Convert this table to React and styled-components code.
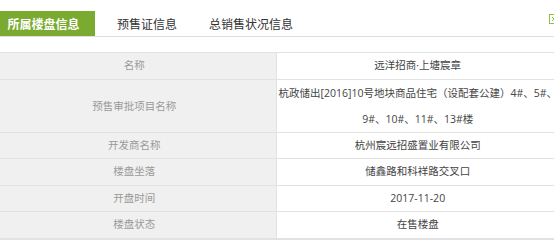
import React from "react";
import styled, { createGlobalStyle } from "styled-components";

const Global = createGlobalStyle`
  html, body { margin: 0; padding: 0; background: #fff; overflow: hidden; }
  body { font-family: "Open Sans", "Noto Sans CJK SC", sans-serif; }
`;

const Page = styled.div`
  margin-left: -8px;
  width: 568px;
`;

const TabBar = styled.div`
  display: flex;
  align-items: stretch;
  margin-top: 11px;
  height: 25px;
  border-bottom: 1px solid #dedede;
`;

const Tab = styled.div`
  display: flex;
  align-items: center;
  justify-content: center;
  font-size: 12px;
  white-space: nowrap;
  ${(p) =>
    p.$active
      ? `
    width: 103px;
    background: #7aaa2f;
    color: #fff;
    font-weight: bold;
  `
      : `
    padding: 1px 10px 0;
    margin-left: 12px;
    color: #333;
  `}
`;

const CloseBox = styled.svg`
  margin-left: auto;
  margin-right: 1px;
  margin-top: 3px;
  width: 10px;
  height: 10px;
  flex: none;
`;

const Table = styled.table`
  margin-top: 15px;
  width: 568px;
  border-collapse: collapse;
  table-layout: fixed;
  font-size: 10.5px;
`;

const Label = styled.td`
  width: 50%;
  padding: 0;
  background: #f0f0f0;
  color: #9a9a9a;
  text-align: center;
  border: 1px solid #e2e2e2;
  line-height: ${(p) => (p.$tall ? "26px" : "25.5px")};
`;

const Value = styled.td`
  width: 50%;
  padding: 0;
  background: #fff;
  color: #444;
  text-align: center;
  border: 1px solid #e2e2e2;
  line-height: ${(p) => (p.$tall ? "26px" : "25.5px")};
`;

const rows = [
  ["名称", "远洋招商·上塘宸章"],
  [
    "预售审批项目名称",
    <>
      杭政储出[2016]10号地块商品住宅（设配套公建）4#、5#、
      <br />
      9#、10#、11#、13#楼
    </>,
    true,
  ],
  ["开发商名称", "杭州宸远招盛置业有限公司"],
  ["楼盘坐落", "储鑫路和科祥路交叉口"],
  ["开盘时间", "2017-11-20"],
  ["楼盘状态", "在售楼盘"],
  ["", ""],
];

export default function App() {
  return (
    <Page>
      <Global />
      <TabBar>
        <Tab $active>所属楼盘信息</Tab>
        <Tab>预售证信息</Tab>
        <Tab>总销售状况信息</Tab>
        <CloseBox viewBox="0 0 10 10">
          <rect x="0.5" y="0.5" width="9" height="9" fill="#fff" stroke="#8cc04a" />
          <path d="M3 3 L7 7 M7 3 L3 7" stroke="#8cc04a" strokeWidth="1" />
        </CloseBox>
      </TabBar>
      <Table>
        <tbody>
          {rows.map(([l, v, tall], i) => (
            <tr key={i}>
              <Label $tall={tall}>{l}</Label>
              <Value $tall={tall}>{v}</Value>
            </tr>
          ))}
        </tbody>
      </Table>
    </Page>
  );
}
